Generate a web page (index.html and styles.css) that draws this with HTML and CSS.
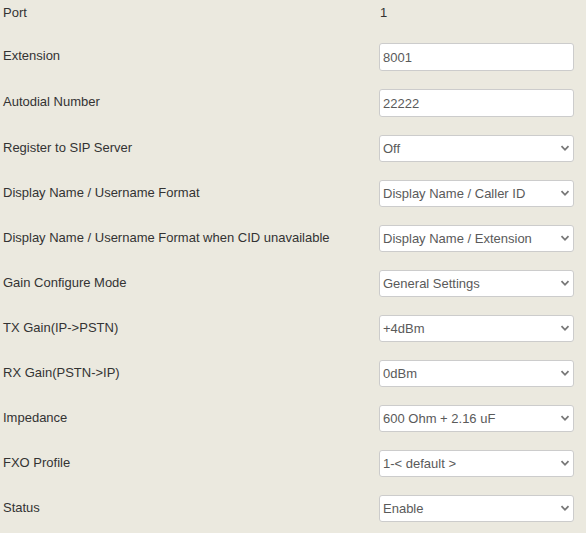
FILE: index.html
```html
<!DOCTYPE html>
<html>
<head>
<meta charset="utf-8">
<link rel="stylesheet" href="styles.css">
</head>
<body>
<div class="form">
  <div class="row row-port"><div class="label">Port</div><div class="value"><span class="static">1</span></div></div>
  <div class="row row-text"><div class="label">Extension</div><div class="value"><input class="field" type="text" value="8001"></div></div>
  <div class="row row-text"><div class="label">Autodial Number</div><div class="value"><input class="field" type="text" value="22222"></div></div>
  <div class="row"><div class="label">Register to SIP Server</div><div class="value sel-wrap"><select class="field sel"><option>Off</option></select><svg class="chev" width="10" height="7" viewBox="0 0 10 7"><path d="M1.5 1.2 L5 4.8 L8.5 1.2" fill="none" stroke="#777" stroke-width="1.8"/></svg></div></div>
  <div class="row"><div class="label">Display Name / Username Format</div><div class="value sel-wrap"><select class="field sel"><option>Display Name / Caller ID</option></select><svg class="chev" width="10" height="7" viewBox="0 0 10 7"><path d="M1.5 1.2 L5 4.8 L8.5 1.2" fill="none" stroke="#777" stroke-width="1.8"/></svg></div></div>
  <div class="row"><div class="label">Display Name / Username Format when CID unavailable</div><div class="value sel-wrap"><select class="field sel"><option>Display Name / Extension</option></select><svg class="chev" width="10" height="7" viewBox="0 0 10 7"><path d="M1.5 1.2 L5 4.8 L8.5 1.2" fill="none" stroke="#777" stroke-width="1.8"/></svg></div></div>
  <div class="row"><div class="label">Gain Configure Mode</div><div class="value sel-wrap"><select class="field sel"><option>General Settings</option></select><svg class="chev" width="10" height="7" viewBox="0 0 10 7"><path d="M1.5 1.2 L5 4.8 L8.5 1.2" fill="none" stroke="#777" stroke-width="1.8"/></svg></div></div>
  <div class="row"><div class="label">TX Gain(IP-&gt;PSTN)</div><div class="value sel-wrap"><select class="field sel"><option>+4dBm</option></select><svg class="chev" width="10" height="7" viewBox="0 0 10 7"><path d="M1.5 1.2 L5 4.8 L8.5 1.2" fill="none" stroke="#777" stroke-width="1.8"/></svg></div></div>
  <div class="row"><div class="label">RX Gain(PSTN-&gt;IP)</div><div class="value sel-wrap"><select class="field sel"><option>0dBm</option></select><svg class="chev" width="10" height="7" viewBox="0 0 10 7"><path d="M1.5 1.2 L5 4.8 L8.5 1.2" fill="none" stroke="#777" stroke-width="1.8"/></svg></div></div>
  <div class="row"><div class="label">Impedance</div><div class="value sel-wrap"><select class="field sel"><option>600 Ohm + 2.16 uF</option></select><svg class="chev" width="10" height="7" viewBox="0 0 10 7"><path d="M1.5 1.2 L5 4.8 L8.5 1.2" fill="none" stroke="#777" stroke-width="1.8"/></svg></div></div>
  <div class="row"><div class="label">FXO Profile</div><div class="value sel-wrap"><select class="field sel"><option>1-&lt; default &gt;</option></select><svg class="chev" width="10" height="7" viewBox="0 0 10 7"><path d="M1.5 1.2 L5 4.8 L8.5 1.2" fill="none" stroke="#777" stroke-width="1.8"/></svg></div></div>
  <div class="row"><div class="label">Status</div><div class="value sel-wrap"><select class="field sel"><option>Enable</option></select><svg class="chev" width="10" height="7" viewBox="0 0 10 7"><path d="M1.5 1.2 L5 4.8 L8.5 1.2" fill="none" stroke="#777" stroke-width="1.8"/></svg></div></div>
</div>
</body>
</html>
```
FILE: styles.css
```css
html, body {
  margin: 0;
  padding: 0;
  background: #ebe9df;
}
body {
  font-family: "Liberation Sans", Arial, sans-serif;
  font-size: 13px;
  color: #333;
}
.form {
  display: flex;
  flex-direction: column;
  width: 586px;
}
.row {
  display: flex;
  align-items: center;
  height: 45px;
}
.row-text {
  height: 46px;
}
.row-port {
  height: 34px;
  align-items: flex-start;
}
.row-port .label, .row-port .static {
  padding-top: 5px;
  display: block;
}
.label {
  width: 379px;
  padding-left: 3px;
  padding-bottom: 3px;
  box-sizing: border-box;
}
.row-port .label {
  padding-bottom: 0;
}
.value {
  width: 195px;
}
.sel-wrap {
  position: relative;
  height: 27px;
}
.static {
  padding-left: 1px;
}
.field {
  box-sizing: border-box;
  width: 195px;
  height: 28px;
  border: 1px solid #ccc;
  border-radius: 3px;
  background: #fff;
  font-family: "Liberation Sans", Arial, sans-serif;
  font-size: 13px;
  color: #5a5a5a;
  padding: 0 3px;
  margin: 0;
  outline: none;
  display: block;
}
.sel {
  height: 27px;
  -webkit-appearance: none;
  appearance: none;
  padding: 0 3px;
}
.chev {
  position: absolute;
  right: 4px;
  top: 10px;
  pointer-events: none;
}
```
